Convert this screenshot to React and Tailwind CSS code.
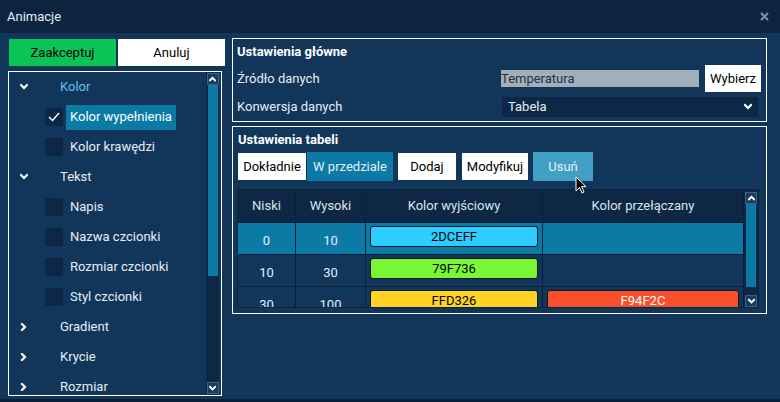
import React from 'react';

const Chevron = ({ dir = 'down', className = '' }) => {
  const pts = {
    down: '1,2 4,5 7,2',
    up: '1,5 4,2 7,5',
    right: '2,1 5,4 2,7',
  }[dir];
  return (
    <svg width="8" height="8" viewBox="0 0 8 8" className={className}>
      <polyline points={pts} fill="none" stroke="white" strokeWidth="2.2" strokeLinecap="square" />
    </svg>
  );
};

const tree = [
  { type: 'cat', label: 'Kolor', open: true, active: true },
  { type: 'item', label: 'Kolor wypełnienia', checked: true, selected: true },
  { type: 'item', label: 'Kolor krawędzi' },
  { type: 'cat', label: 'Tekst', open: true },
  { type: 'item', label: 'Napis' },
  { type: 'item', label: 'Nazwa czcionki' },
  { type: 'item', label: 'Rozmiar czcionki' },
  { type: 'item', label: 'Styl czcionki' },
  { type: 'cat', label: 'Gradient' },
  { type: 'cat', label: 'Krycie' },
  { type: 'cat', label: 'Rozmiar' },
];

const rows = [
  { low: '0', high: '10', out: { hex: '2DCEFF', bg: 'bg-[#2dceff]', fg: 'text-black' }, sel: true },
  { low: '10', high: '30', out: { hex: '79F736', bg: 'bg-[#79f736]', fg: 'text-black' } },
  {
    low: '30',
    high: '100',
    out: { hex: 'FFD326', bg: 'bg-[#ffd326]', fg: 'text-black' },
    sw: { hex: 'F94F2C', bg: 'bg-[#f94f2c]', fg: 'text-white' },
  },
];

function ScrollBtn({ dir }) {
  return (
    <div className="h-[12px] w-[12px] flex items-center justify-center border border-[#3f5f80] bg-[#1b3b5e]">
      <Chevron dir={dir} className="w-[7px] h-[7px]" />
    </div>
  );
}

function Swatch({ c }) {
  return (
    <div className={`mx-[4px] mt-[3px] h-[21px] rounded-[3px] border border-[#0a1726] flex items-center justify-center text-[13px] ${c.bg} ${c.fg}`}>
      {c.hex}
    </div>
  );
}

export default function App() {
  return (
    <div className="w-[780px] h-[402px] bg-[#0b2038] flex flex-col font-['Roboto',sans-serif] text-[13px] text-[#e6edf4] relative overflow-hidden">
      {/* Title bar */}
      <div className="h-[33px] bg-[#0c2440] flex items-center justify-between pl-[7px] pr-[11px]">
        <span className="text-[13px] text-[#e8eef4]">Animacje</span>
        <svg width="9" height="9" viewBox="0 0 9 9">
          <path d="M1 1 L8 8 M8 1 L1 8" stroke="#7f8d9d" strokeWidth="2.2" />
        </svg>
      </div>

      {/* Body */}
      <div className="h-[366px] bg-[#12365a] flex pl-[8px] pt-[5px]">
        {/* Left column */}
        <div className="w-[217px] flex flex-col pt-[1px]">
          <div className="flex gap-[2px] ml-[1px]">
            <button className="w-[107px] h-[27px] bg-[#0ac456] text-black text-[13px]">Zaakceptuj</button>
            <button className="w-[107px] h-[27px] bg-white text-black text-[13px]">Anuluj</button>
          </div>
          <div className="mt-[5px] w-[214px] h-[325px] border border-white flex">
            <div className="flex-1 overflow-hidden">
              {tree.map((t, i) =>
                t.type === 'cat' ? (
                  <div key={i} className="h-[30px] flex items-center">
                    <span className="w-[51px] pl-[11px] flex items-center">
                      <Chevron dir={t.open ? 'down' : 'right'} />
                    </span>
                    <span className={t.active ? 'text-[#5fc2f0]' : 'text-[#e6edf4]'}>{t.label}</span>
                  </div>
                ) : (
                  <div key={i} className="h-[30px] flex items-center pl-[36px]">
                    <span className="w-[18px] h-[18px] bg-[#0d2846] flex items-center justify-center">
                      {t.checked && (
                        <svg width="12" height="10" viewBox="0 0 12 10">
                          <polyline points="1,5 4.5,8.5 11,1" fill="none" stroke="white" strokeWidth="1.4" />
                        </svg>
                      )}
                    </span>
                    <span className={`ml-[3px] h-[25px] px-[4px] flex items-center ${t.selected ? 'bg-[#0b7ba6] text-white' : ''}`}>
                      {t.label}
                    </span>
                  </div>
                )
              )}
            </div>
            <div className="w-[13px] mr-[2px] bg-[#0d2744] flex flex-col items-center py-[1px]">
              <ScrollBtn dir="up" />
              <div className="w-[10px] h-[191px] ml-[1px] bg-[#0b7ba6]" />
              <div className="flex-1" />
              <ScrollBtn dir="down" />
            </div>
          </div>
        </div>

        {/* Right column */}
        <div className="ml-[7px] flex flex-col">
          {/* Ustawienia główne */}
          <div className="w-[535px] h-[84px] border border-white flex flex-col">
            <div className="h-[26px] pl-[4px] flex items-center font-bold text-white">Ustawienia główne</div>
            <div className="h-[27px] flex items-center pl-[4px] pr-[5px]">
              <span className="flex-1">Źródło danych</span>
              <div className="w-[198px] h-[17px] bg-[#a3aebb] text-[#28323e] flex items-center">Temperatura</div>
              <button className="ml-[6px] w-[56px] h-[27px] bg-white text-black">Wybierz</button>
            </div>
            <div className="mt-[5px] h-[20px] flex items-center pl-[4px] pr-[8px]">
              <span className="flex-1">Konwersja danych</span>
              <div className="w-[256px] h-[20px] bg-[#0d2846] flex items-center justify-between pl-[6px] pr-[6px]">
                <span>Tabela</span>
                <Chevron dir="down" />
              </div>
            </div>
          </div>

          {/* Ustawienia tabeli */}
          <div className="mt-[4px] w-[535px] h-[188px] border border-white flex flex-col">
            <div className="h-[25px] pl-[5px] flex items-center font-bold text-white">Ustawienia tabeli</div>
            <div className="h-[29px] pl-[5px] flex items-center">
              <button className="w-[68px] h-[27px] bg-white text-black">Dokładnie</button>
              <button className="ml-px w-[86px] h-[29px] bg-[#0b7ba6] text-[#e6edf4]">W przedziale</button>
              <button className="ml-[5px] w-[58px] h-[27px] bg-white text-black">Dodaj</button>
              <button className="ml-[6px] w-[66px] h-[27px] bg-white text-black">Modyfikuj</button>
              <button className="ml-[5px] w-[60px] h-[29px] bg-[#409fc2] text-[#e6edf4]">Usuń</button>
            </div>
            <div className="mt-[8px] ml-[4px] w-[522px] h-[119px] flex border border-[#0b2540] bg-[#12355a] overflow-hidden">
              <div className="flex-1 overflow-hidden">
                <div className="grid grid-cols-[58px_70px_177px_201px] h-[32px] bg-[#0d2744] text-[#dbe4ec]">
                  {['Niski', 'Wysoki', 'Kolor wyjściowy', 'Kolor przełączany'].map((h) => (
                    <div key={h} className="flex items-center justify-center border-r border-[#0a2039]">
                      {h}
                    </div>
                  ))}
                </div>
                {rows.map((r, i) => (
                  <div
                    key={i}
                    className={`grid grid-cols-[58px_70px_177px_201px] h-[32px] border-t border-[#0a2039] ${r.sel ? 'bg-[#0b7ba6]' : ''}`}
                  >
                    <div className="flex items-center justify-center pt-[4px] border-r border-[#0a2039]">{r.low}</div>
                    <div className="flex items-center justify-center pt-[4px] border-r border-[#0a2039]">{r.high}</div>
                    <div className="border-r border-[#0a2039]">
                      <Swatch c={r.out} />
                    </div>
                    <div className="border-r border-[#0a2039]">{r.sw && <Swatch c={r.sw} />}</div>
                  </div>
                ))}
              </div>
              <div className="w-[14px] bg-[#0d2744] flex flex-col items-center pt-[2px] pb-[0px]">
                <ScrollBtn dir="up" />
                <div className="w-[10px] h-[83px] bg-[#0b7ba6]" />
                <div className="flex-1" />
                <ScrollBtn dir="down" />
              </div>
            </div>
          </div>
        </div>
      </div>

      {/* Mouse cursor */}
      <svg className="absolute left-[575px] top-[176px]" width="13" height="19" viewBox="0 0 13 19">
        <path d="M1 1 L1 15 L4.5 11.5 L7 17 L9 16 L6.6 10.6 L11 10.6 Z" fill="black" stroke="white" strokeWidth="1" />
      </svg>
    </div>
  );
}
